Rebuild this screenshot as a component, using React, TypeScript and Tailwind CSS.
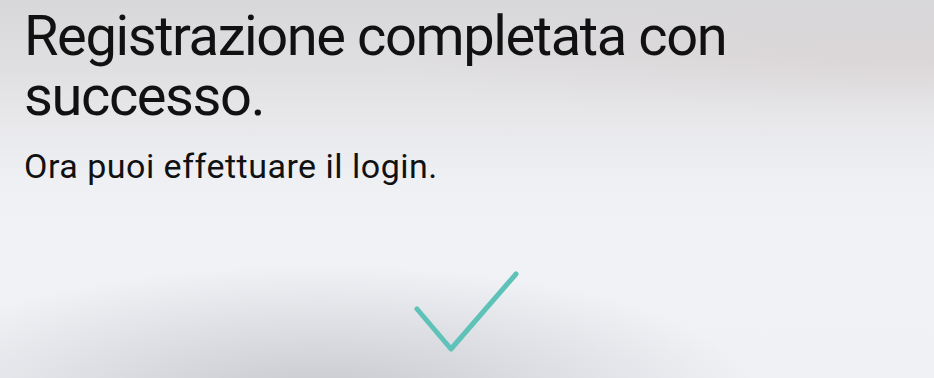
import React from "react";

export default function App() {
  return (
    <div
      className="relative w-full h-[378px] overflow-hidden bg-[radial-gradient(ellipse_440px_135px_at_320px_400px,rgba(150,150,156,0.45),rgba(150,150,156,0)),radial-gradient(ellipse_520px_60px_at_900px_60px,rgba(210,195,190,0.25),rgba(210,195,190,0)),linear-gradient(to_bottom,#d8d7da_0%,#dedde0_15%,#e8e8eb_32%,#eef0f4_48%,#f0f2f6_62%,#eff1f5_100%)]"
      style={{ fontFamily: "Roboto, 'Liberation Sans', sans-serif" }}
    >
      <div className="flex flex-col pl-[24px] pt-[6px]">
        <h1 className="text-[56px] leading-[60px] font-normal text-[#111] tracking-[-1.4px]">
          Registrazione completata con
          <br />
          successo.
        </h1>
        <p className="mt-[20px] text-[34px] leading-[40px] text-[#111] tracking-[0.5px]">
          Ora puoi effettuare il login.
        </p>
      </div>
      <div className="flex justify-center mt-[85px]">
        <svg width="106" height="84" viewBox="0 0 106 84" fill="none">
          <polyline
            points="3,38 37,78 102,3"
            stroke="#5fc2b9"
            strokeWidth="5"
            strokeLinecap="round"
            strokeLinejoin="round"
          />
        </svg>
      </div>
    </div>
  );
}
